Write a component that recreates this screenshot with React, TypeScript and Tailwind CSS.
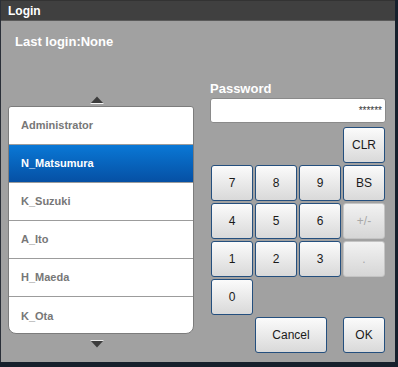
const users = ["Administrator", "N_Matsumura", "K_Suzuki", "A_Ito", "H_Maeda", "K_Ota"];

const font = { fontFamily: '"Liberation Sans", Arial, sans-serif' };

type KeyProps = { label: string; disabled?: boolean; className?: string };

const Key = ({ label, disabled, className = "" }: KeyProps) => (
  <button
    className={
      "h-[36px] rounded-[3px] border text-[12px] flex items-center justify-center bg-gradient-to-b " +
      (disabled
        ? "border-[#c4c4c4] from-[#f2f2f2] to-[#d6d6d6] text-[#a8a8a8] "
        : "border-[#244f7e] from-[#fbfbfb] to-[#d9d9d9] text-[#1a1a1a] ") +
      className
    }
  >
    {label}
  </button>
);

const Arrow = ({ down }: { down?: boolean }) => (
  <svg width="14" height="8" viewBox="0 0 14 8" className="ml-[82px]">
    {down ? (
      <>
        <path d="M0.5 0.5 H13.5 L7 7.5 Z" fill="#3c3c3c" />
        <path d="M0.5 0.5 H13.5" stroke="#e8e8e8" strokeWidth="1" />
      </>
    ) : (
      <>
        <path d="M7 0.5 L13.5 7.5 H0.5 Z" fill="#3c3c3c" />
        <path d="M0.5 7.5 H13.5" stroke="#f4f4f4" strokeWidth="1" />
      </>
    )}
  </svg>
);

const App = () => {
  return (
    <div className="w-[398px] h-[367px] bg-[#16202c] flex flex-col" style={font}>
      <div className="w-[395px] h-[362px] border-l border-[#2a2f38] flex flex-col">
        {/* title bar */}
        <div className="h-[21px] bg-[#404040] border-t border-[#333] border-b border-b-[#5a5a5a] flex items-center pl-[7px]">
          <span className="text-white text-[12px] font-bold">Login</span>
        </div>

        <div className="flex-1 bg-[#a1a1a1] relative">
          <div className="pt-[13px] pl-[14px] text-white font-bold text-[13px] leading-[16px]">
            Last login:None
          </div>

          <div className="flex mt-[31px]">
            {/* user list */}
            <div className="w-[186px] ml-[7px] mt-[15px] flex flex-col">
              <Arrow />
              <div className="mt-[2px] h-[228px] bg-white border border-[#7c7c7c] rounded-t-[3px] rounded-b-[8px] overflow-hidden flex flex-col">
                {users.map((u, i) => (
                  <div
                    key={u}
                    className={
                      "h-[38px] shrink-0 flex items-center pl-[12px] text-[11px] font-bold " +
                      (i < users.length - 1 ? "border-b border-[#9c9c9c] " : "") +
                      (i === 1
                        ? "bg-gradient-to-b from-[#0a78d6] to-[#0650a4] text-white"
                        : "text-[#777]")
                    }
                  >
                    {u}
                  </div>
                ))}
              </div>
              <div className="mt-[6px]">
                <Arrow down />
              </div>
            </div>

            {/* password + keypad */}
            <div className="ml-[16px] w-[176px]">
              <div className="text-white font-bold text-[13px] leading-[16px]">Password</div>
              <div className="mt-[1px] h-[25px] bg-white rounded-[3px] border border-[#8a8a8a] flex items-center justify-end pr-[3px] text-[10px] text-[#333]">
                ******
              </div>
              <div className="mt-[4px] ml-[1px] grid grid-cols-[42px_42px_42px_42px] gap-x-[2px] gap-y-[2px]">
                <Key label="CLR" className="col-start-4" />
                <Key label="7" />
                <Key label="8" />
                <Key label="9" />
                <Key label="BS" />
                <Key label="4" />
                <Key label="5" />
                <Key label="6" />
                <Key label="+/-" disabled />
                <Key label="1" />
                <Key label="2" />
                <Key label="3" />
                <Key label="." disabled />
                <Key label="0" />
                <div className="col-span-3" />
                <Key label="Cancel" className="col-start-2 col-span-2 w-[72px]" />
                <Key label="OK" className="col-start-4" />
              </div>
            </div>
          </div>
        </div>
      </div>
    </div>
  );
};

export default App;
